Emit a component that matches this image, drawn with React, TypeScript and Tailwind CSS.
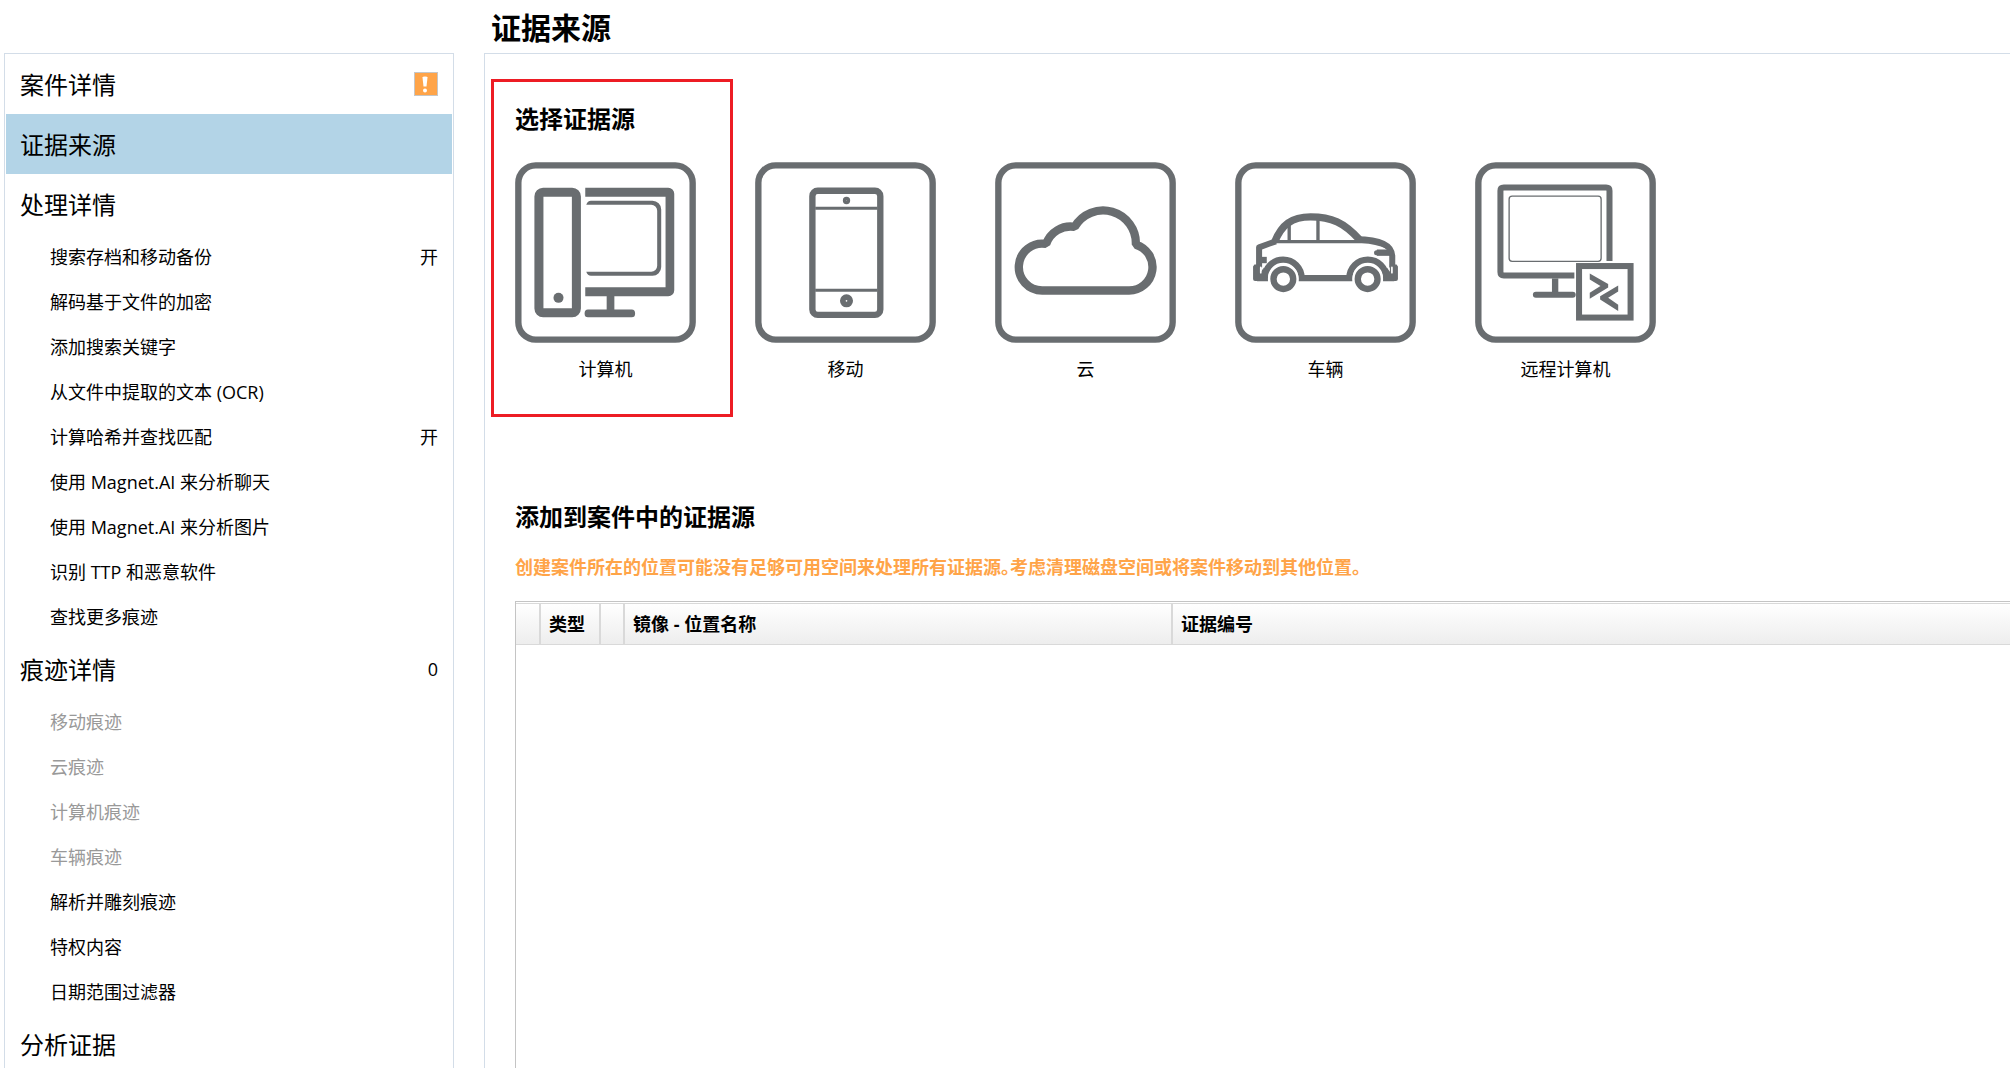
import type { ReactNode } from "react";

const INK = "#696d70";

function Frame({ x, y, children }: { x: number; y: number; children: ReactNode }) {
  return (
    <svg viewBox={`${x} ${y} 541 541`} className="block size-[181px]" fill="none" stroke={INK} aria-hidden="true">
      <rect x={x + 10} y={y + 10} width="521" height="521" rx="52" strokeWidth="19" />
      {children}
    </svg>
  );
}

function ComputerIcon() {
  return (
    <Frame x={107} y={277}>
      <g fill={INK} stroke="none">
        <path
          fillRule="evenodd"
          d="M191 354H278A26 26 0 0 1 304 380V715A26 26 0 0 1 278 741H191A26 26 0 0 1 165 715V380A26 26 0 0 1 191 354ZM192 381V714H277V381Z"
        />
        <circle cx="237" cy="683" r="15" />
        <path d="M317 354H565A18 18 0 0 1 583 372V660A18 18 0 0 1 565 678H404V718H456Q466 718 466 729.5T456 741H325Q315 741 315 729.5T325 718H381V678H317V651H557V381H317Z" />
        <path
          fillRule="evenodd"
          d="M320 405Q324 393 334 393H518A26 26 0 0 1 544 419V591A26 26 0 0 1 518 617H334Q324 617 320 605H514A18 18 0 0 0 532 587V423A18 18 0 0 0 514 405Z"
        />
      </g>
    </Frame>
  );
}

function MobileIcon() {
  return (
    <Frame x={46} y={37}>
      <rect x="217.500" y="123" width="203" height="371" rx="16" strokeWidth="19" />
      <path d="M226 175H412M226 420H412" strokeWidth="9" />
      <circle cx="319.500" cy="152" r="6" strokeWidth="10" />
      <circle cx="319.500" cy="452" r="11" strokeWidth="17" />
    </Frame>
  );
}

function CloudIcon() {
  return (
    <Frame x={46} y={37}>
      <path
        d="M187 421A70 70 0 1 1 199 282A77 77 0 0 1 284 231A98 98 0 0 1 467 284A70 70 0 0 1 446 421Z"
        strokeWidth="25"
        strokeLinejoin="bevel"
      />
    </Frame>
  );
}

function VehicleIcon() {
  return (
    <Frame x={46} y={37}>
      <path d="M165 275C185 225 215 201 272 201C335 201 372 219 417 268" strokeWidth="22" />
      <path d="M408 268C462 268 514 277 516 318V352" strokeWidth="18" />
      <path d="M168 274L118 292V352" strokeWidth="18" strokeLinejoin="round" />
      <path d="M160 275H425C450 276 480 282 500 292" strokeWidth="10" />
      <path d="M208 216V275M294 205V275" strokeWidth="10" />
      <path d="M118 330H141" strokeWidth="19" />
      <path d="M516 308H470" strokeWidth="19" />
      <path d="M470 308h-1" strokeWidth="15" strokeLinecap="round" />
      <path d="M112 384H135A55 55 0 0 1 245 384H388A55 55 0 0 1 498 384H522" strokeWidth="19" />
      <path d="M104 343H124V365L132 352V393H106Q100 393 100 387V349Z" fill={INK} stroke="none" />
      <path d="M529 343H509V365L500 352V393H527Q533 393 533 387V349Z" fill={INK} stroke="none" />
      <path d="M123 352V368M515 352V368" stroke="#fff" strokeWidth="5" strokeLinecap="round" />
      <g fill="#fff">
        <circle cx="190.500" cy="387" r="46" stroke="none" />
        <circle cx="442.500" cy="387" r="46" stroke="none" />
        <circle cx="190.500" cy="387" r="29.500" strokeWidth="19" />
        <circle cx="442.500" cy="387" r="29.500" strokeWidth="19" />
      </g>
    </Frame>
  );
}

function RemoteIcon() {
  return (
    <Frame x={46} y={37}>
      <path d="M448 333V123Q448 113 438 113H132Q122 113 122 123V366Q122 376 132 376H343" strokeWidth="18" />
      <rect x="148" y="139" width="275" height="195" rx="9" strokeWidth="4" />
      <path d="M285.500 385V428" strokeWidth="19" />
      <path d="M228 434H338" strokeWidth="18" strokeLinecap="round" />
      <rect x="357" y="348" width="154" height="154" fill="#fff" strokeWidth="18" />
      <g fill={INK} stroke="none">
        <path d="M389 370L444 402V412L389 446V428L421 408L389 388Z" />
        <path d="M474 406L420 438V448L474 482V464L444 443L474 424Z" />
      </g>
    </Frame>
  );
}

function WarningIcon() {
  return (
    <svg viewBox="0 0 24 24" className="block size-6" role="img" aria-label="警告">
      <rect x="0.500" y="0.500" width="23" height="23" fill="#ffa448" stroke="#c6c6c6" />
      <path d="M8.500 5.500Q8.500 4.500 11 4.500T13.500 5.500L12.500 14.500H9.500Z" fill="#fff" />
      <circle cx="11" cy="18.500" r="2" fill="#fff" />
    </svg>
  );
}

type Item = { label: string; value?: string; disabled?: boolean };
type Group = { title: string; selected?: boolean; status?: ReactNode; items?: Item[] };

const groups: Group[] = [
  { title: "案件详情", status: <WarningIcon /> },
  { title: "证据来源", selected: true },
  {
    title: "处理详情",
    items: [
      { label: "搜索存档和移动备份", value: "开" },
      { label: "解码基于文件的加密" },
      { label: "添加搜索关键字" },
      { label: "从文件中提取的文本 (OCR)" },
      { label: "计算哈希并查找匹配", value: "开" },
      { label: "使用 Magnet.AI 来分析聊天" },
      { label: "使用 Magnet.AI 来分析图片" },
      { label: "识别 TTP 和恶意软件" },
      { label: "查找更多痕迹" },
    ],
  },
  {
    title: "痕迹详情",
    status: "0",
    items: [
      { label: "移动痕迹", disabled: true },
      { label: "云痕迹", disabled: true },
      { label: "计算机痕迹", disabled: true },
      { label: "车辆痕迹", disabled: true },
      { label: "解析并雕刻痕迹" },
      { label: "特权内容" },
      { label: "日期范围过滤器" },
    ],
  },
  { title: "分析证据" },
];

const sources = [
  { label: "计算机", icon: <ComputerIcon /> },
  { label: "移动", icon: <MobileIcon /> },
  { label: "云", icon: <CloudIcon /> },
  { label: "车辆", icon: <VehicleIcon /> },
  { label: "远程计算机", icon: <RemoteIcon /> },
];

function Sidebar() {
  return (
    <nav className="mt-[53px] ml-1 w-[450px] shrink-0 overflow-hidden border border-b-0 border-[#d3dde8] px-px">
      {groups.map((group) => (
        <div key={group.title}>
          <button
            type="button"
            className={`flex h-[60px] w-full items-center justify-between px-[14px] text-left text-2xl ${
              group.selected ? "bg-[#b3d4e7]" : ""
            }`}
          >
            <span className="pt-0.5">{group.title}</span>
            <span className="text-lg">{group.status}</span>
          </button>
          {group.items?.map((item) => (
            <button
              key={item.label}
              type="button"
              disabled={item.disabled}
              className="flex h-[45px] w-full items-center justify-between pr-[14px] pl-11 text-left text-lg disabled:text-[#999999]"
            >
              <span>{item.label}</span>
              <span>{item.value}</span>
            </button>
          ))}
        </div>
      ))}
    </nav>
  );
}

function EvidenceTable() {
  return (
    <div className="mt-5 flex-1 border-t border-l border-[#c4c4c4] pt-px">
      <table className="w-full table-fixed border-collapse text-left text-lg">
        <colgroup>
          <col className="w-6" />
          <col className="w-[60px]" />
          <col className="w-6" />
          <col className="w-[548px]" />
          <col />
        </colgroup>
        <thead>
          <tr className="h-[41px] bg-linear-to-b from-white to-[#ededed] [&>*]:border-y [&>*]:border-[#d9d9d9] [&>*]:p-0 [&>*]:pl-2 [&>*:not(:last-child)]:border-r-2">
            <td />
            <th scope="col">类型</th>
            <td />
            <th scope="col">镜像 - 位置名称</th>
            <th scope="col">证据编号</th>
          </tr>
        </thead>
      </table>
    </div>
  );
}

export default function App() {
  return (
    <div
      lang="zh-CN"
      className="flex h-screen overflow-hidden bg-white font-['Open_Sans','Noto_Sans_CJK_SC',sans-serif] text-black"
    >
      <Sidebar />
      <main className="ml-[30px] flex min-w-0 flex-1 flex-col">
        <h1 className="flex h-[53px] shrink-0 items-center pt-0.5 pl-[7px] text-3xl font-bold">证据来源</h1>
        <div className="flex min-h-0 flex-1 flex-col border-t border-l border-[#d3dde8] pt-[47px] pl-[30px]">
          <section className="relative">
            <div className="pointer-events-none absolute -top-[22px] -left-6 h-[338px] w-[242px] border-3 border-[#ed1c24]" />
            <h2 className="text-2xl/9 font-bold">选择证据源</h2>
            <div className="mt-[25px] flex gap-[59px]">
              {sources.map((source) => (
                <button key={source.label} type="button" className="flex flex-col items-center gap-3 text-lg">
                  {source.icon}
                  <span>{source.label}</span>
                </button>
              ))}
            </div>
          </section>
          <h2 className="mt-[116px] text-2xl/9 font-bold">添加到案件中的证据源</h2>
          <p className="mt-[18px] text-lg/7 font-bold text-[#ffa448] [font-feature-settings:'halt']">
            创建案件所在的位置可能没有足够可用空间来处理所有证据源。考虑清理磁盘空间或将案件移动到其他位置。
          </p>
          <EvidenceTable />
        </div>
      </main>
    </div>
  );
}
